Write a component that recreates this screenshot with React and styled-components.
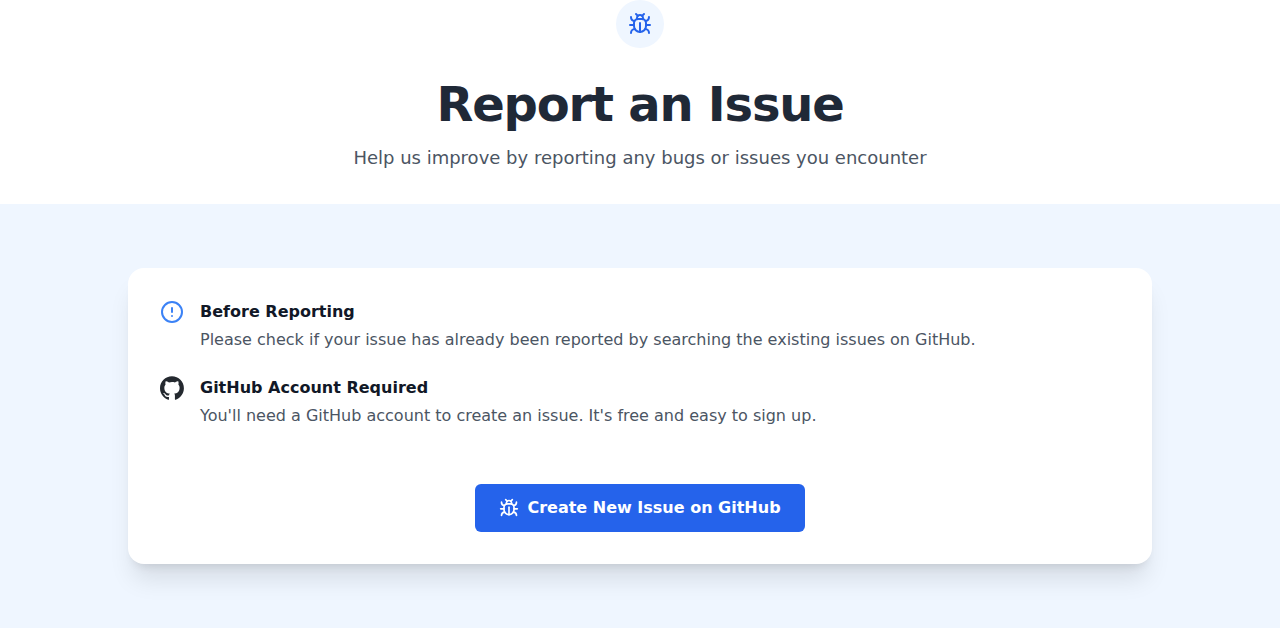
import React from "react";
import styled, { createGlobalStyle } from "styled-components";
import { FiAlertCircle } from "react-icons/fi";

const GlobalStyle = createGlobalStyle`
  *, *::before, *::after { box-sizing: border-box; }
  body {
    margin: 0;
    font-family: "DejaVu Sans", sans-serif;
    font-size: 16px;
    line-height: 24px;
    color: #111827;
    background: #ffffff;
  }
  h1, h2, p { margin: 0; }
`;

const Header = styled.header`
  display: flex;
  flex-direction: column;
  align-items: center;
  padding-bottom: 32px;
  text-align: center;
`;

const Badge = styled.div`
  display: flex;
  padding: 12px;
  margin-bottom: 32px;
  border-radius: 50%;
  color: #2563eb;
  background: #eff6ff;
`;

const Title = styled.h1`
  margin-bottom: 16px;
  font-size: 48px;
  line-height: 48px;
  font-weight: 700;
  letter-spacing: -0.025em;
  color: #1f2937;
`;

const Subtitle = styled.p`
  font-size: 18px;
  line-height: 28px;
  color: #4b5563;
`;

const Section = styled.main`
  padding: 64px 32px;
  background: #eff6ff;
`;

const Card = styled.div`
  max-width: 1024px;
  margin: 0 auto;
  padding: 32px;
  border-radius: 16px;
  background: #ffffff;
  box-shadow: 0 20px 25px -5px rgba(0, 0, 0, 0.1), 0 8px 10px -6px rgba(0, 0, 0, 0.1);
`;

const Notes = styled.div`
  display: flex;
  flex-direction: column;
  gap: 24px;
`;

const Note = styled.section`
  display: flex;
  align-items: flex-start;
  gap: 16px;
`;

const NoteIcon = styled.span`
  display: flex;
  flex-shrink: 0;
  color: ${(p) => p.$color};
`;

const NoteTitle = styled.h2`
  margin-bottom: 4px;
  font-size: 16px;
  line-height: 24px;
  font-weight: 600;
`;

const NoteText = styled.p`
  color: #4b5563;
`;

const Actions = styled.div`
  display: flex;
  justify-content: center;
  padding-top: 56px;
`;

const CreateButton = styled.button`
  display: inline-flex;
  align-items: center;
  gap: 8px;
  padding: 12px 24px;
  border: 0;
  border-radius: 6px;
  font: inherit;
  font-weight: 600;
  color: #ffffff;
  background: #2563eb;
  cursor: pointer;
  &:hover { background: #1d4ed8; }
`;

function BugIcon({ size }) {
  return (
    <svg
      width={size}
      height={size}
      viewBox="0 0 24 24"
      fill="none"
      stroke="currentColor"
      strokeWidth="2"
      strokeLinecap="round"
      strokeLinejoin="round"
      aria-hidden="true"
    >
      <path d="m8 2 1.88 1.88" />
      <path d="M14.12 3.88 16 2" />
      <path d="M9 7.13v-1a3.003 3.003 0 1 1 6 0v1" />
      <path d="M12 20c-3.3 0-6-2.7-6-6v-3a4 4 0 0 1 4-4h4a4 4 0 0 1 4 4v3c0 3.3-2.7 6-6 6" />
      <path d="M12 20v-9" />
      <path d="M6.53 9C4.6 8.8 3 7.1 3 5" />
      <path d="M6 13H2" />
      <path d="M3 21c0-2.1 1.7-3.9 3.8-4" />
      <path d="M20.97 5c0 2.1-1.6 3.8-3.5 4" />
      <path d="M22 13h-4" />
      <path d="M17.2 17c2.1.1 3.8 1.9 3.8 4" />
    </svg>
  );
}

function GitHubMark({ size }) {
  return (
    <svg width={size} height={size} viewBox="0 0 98 96" fill="currentColor" aria-hidden="true">
      <path
        fillRule="evenodd"
        clipRule="evenodd"
        d="M48.854 0C21.839 0 0 22 0 49.217c0 21.756 13.993 40.172 33.405 46.69 2.427.49 3.316-1.059 3.316-2.362 0-1.141-.08-5.052-.08-9.127-13.59 2.934-16.42-5.867-16.42-5.867-2.184-5.704-5.42-7.17-5.42-7.17-4.448-3.015.324-3.015.324-3.015 4.934.326 7.523 5.052 7.523 5.052 4.367 7.496 11.404 5.378 14.235 4.074.404-3.178 1.699-5.378 3.074-6.6-10.839-1.141-22.243-5.378-22.243-24.283 0-5.378 1.94-9.778 5.014-13.2-.485-1.222-2.184-6.275.486-13.038 0 0 4.125-1.304 13.426 5.052a46.97 46.97 0 0 1 12.214-1.63c4.125 0 8.33.571 12.213 1.63 9.302-6.356 13.427-5.052 13.427-5.052 2.67 6.763.97 11.816.485 13.038 3.155 3.422 5.015 7.822 5.015 13.2 0 18.905-11.404 23.06-22.324 24.283 1.78 1.548 3.316 4.481 3.316 9.126 0 6.6-.08 11.897-.08 13.526 0 1.304.89 2.853 3.316 2.364 19.412-6.52 33.405-24.935 33.405-46.691C97.707 22 75.788 0 48.854 0z"
      />
    </svg>
  );
}

export default function App() {
  return (
    <>
      <GlobalStyle />
      <Header>
        <Badge><BugIcon size={24} /></Badge>
        <Title>Report an Issue</Title>
        <Subtitle>Help us improve by reporting any bugs or issues you encounter</Subtitle>
      </Header>
      <Section>
        <Card>
          <Notes>
            <Note>
              <NoteIcon $color="#3b82f6"><FiAlertCircle size={24} aria-hidden="true" /></NoteIcon>
              <div>
                <NoteTitle>Before Reporting</NoteTitle>
                <NoteText>Please check if your issue has already been reported by searching the existing issues on GitHub.</NoteText>
              </div>
            </Note>
            <Note>
              <NoteIcon $color="#24292f"><GitHubMark size={24} /></NoteIcon>
              <div>
                <NoteTitle>GitHub Account Required</NoteTitle>
                <NoteText>You'll need a GitHub account to create an issue. It's free and easy to sign up.</NoteText>
              </div>
            </Note>
          </Notes>
          <Actions>
            <CreateButton type="button"><BugIcon size={20} />Create New Issue on GitHub</CreateButton>
          </Actions>
        </Card>
      </Section>
    </>
  );
}
